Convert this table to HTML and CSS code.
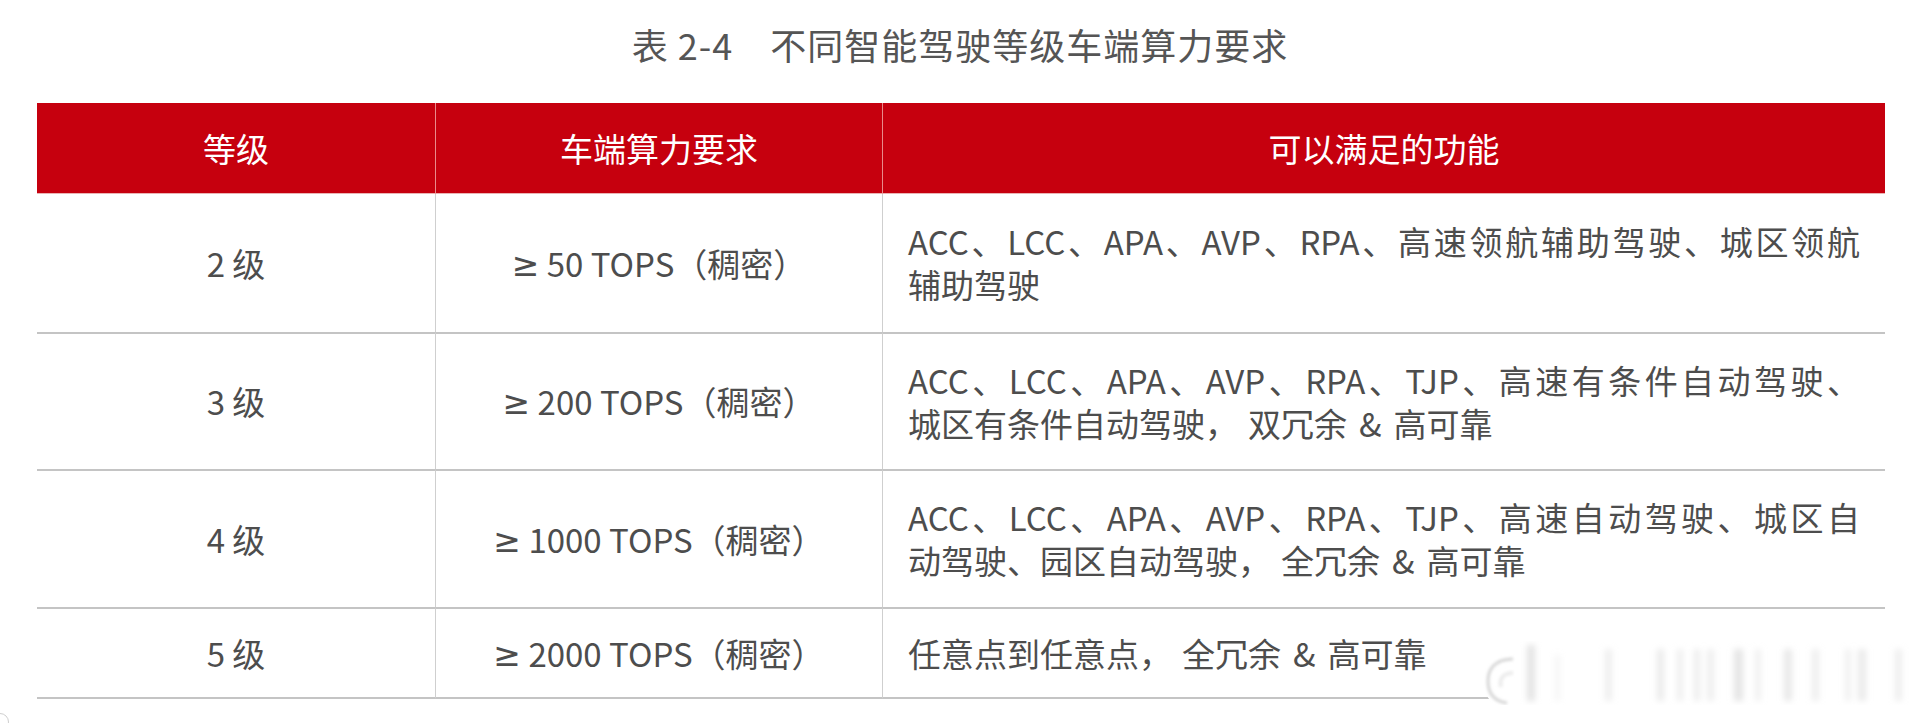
FILE: index.html
```html
<!DOCTYPE html>
<html lang="zh-CN">
<head>
<meta charset="utf-8">
<title>表 2-4 不同智能驾驶等级车端算力要求</title>
<link rel="stylesheet" href="styles.css">
</head>
<body>
<div class="page">
  <h1 class="title">表 2-4　不同智能驾驶等级车端算力要求</h1>
  <div class="grid">
    <div class="cell head c1">等级</div>
    <div class="cell head c2">车端算力要求</div>
    <div class="cell head c3">可以满足的功能</div>

    <div class="cell body first c1">2 级</div>
    <div class="cell body first c2"><span class="ge">≥</span>&nbsp;50 TOPS（稠密）</div>
    <div class="cell body first c3 fn">
      <span class="ln full">ACC、LCC、APA、AVP、RPA、高速领航辅助驾驶、城区领航</span>
      <span class="ln">辅助驾驶</span>
    </div>

    <div class="cell body c1">3 级</div>
    <div class="cell body c2"><span class="ge">≥</span>&nbsp;200 TOPS（稠密）</div>
    <div class="cell body c3 fn">
      <span class="ln full">ACC、LCC、APA、AVP、RPA、TJP、高速有条件自动驾驶、</span>
      <span class="ln">城区有条件自动驾驶，<span class="after-comma">双冗余</span><span class="amp">&amp;</span>高可靠</span>
    </div>

    <div class="cell body c1">4 级</div>
    <div class="cell body c2"><span class="ge">≥</span>&nbsp;1000 TOPS（稠密）</div>
    <div class="cell body c3 fn">
      <span class="ln full">ACC、LCC、APA、AVP、RPA、TJP、高速自动驾驶、城区自</span>
      <span class="ln">动驾驶、园区自动驾驶，<span class="after-comma">全冗余</span><span class="amp">&amp;</span>高可靠</span>
    </div>

    <div class="cell body last c1">5 级</div>
    <div class="cell body last c2"><span class="ge">≥</span>&nbsp;2000 TOPS（稠密）</div>
    <div class="cell body last c3 fn">
      <span class="ln">任意点到任意点，<span class="after-comma">全冗余</span><span class="amp">&amp;</span>高可靠</span>
    </div>
  </div>

  <svg class="watermark" width="437" height="64" viewBox="0 0 437 64" aria-hidden="true">
    <defs>
      <filter id="blur" x="-100%" y="-20%" width="300%" height="140%">
        <feGaussianBlur stdDeviation="3"/>
      </filter>
      <filter id="soft" x="-50%" y="-50%" width="200%" height="200%">
        <feGaussianBlur stdDeviation="1.8"/>
      </filter>
    </defs>
    <path d="M24 16 H437 V64 H24 C8 64 3 54 3 40 C3 26 10 16 24 16 Z" fill="#ffffff"/>
    <path d="M32 18 C14 18 7 28 7 40 C7 52 12 60 26 62" fill="none" stroke="#d6d6d6" stroke-width="3" filter="url(#soft)"/>
    <path d="M32 32 C22 32 18 38 20 46" fill="none" stroke="#ececec" stroke-width="4" filter="url(#soft)"/>
    <g filter="url(#blur)" fill="#d9d9d9">
      <rect x="46" y="4" width="8" height="56" opacity="0.75"/>
      <rect x="74" y="14" width="5" height="46" opacity="0.3"/>
      <rect x="124" y="8" width="7" height="52" opacity="0.45"/>
      <rect x="176" y="8" width="7" height="52" opacity="0.55"/>
      <rect x="196" y="8" width="6" height="52" opacity="0.45"/>
      <rect x="213" y="8" width="6" height="52" opacity="0.5"/>
      <rect x="226" y="8" width="7" height="52" opacity="0.45"/>
      <rect x="253" y="8" width="9" height="52" opacity="0.7"/>
      <rect x="274" y="8" width="6" height="52" opacity="0.4"/>
      <rect x="303" y="8" width="8" height="52" opacity="0.6"/>
      <rect x="331" y="8" width="7" height="52" opacity="0.45"/>
      <rect x="364" y="8" width="6" height="52" opacity="0.4"/>
      <rect x="377" y="8" width="8" height="52" opacity="0.55"/>
      <rect x="414" y="8" width="7" height="52" opacity="0.45"/>
    </g>
  </svg>
  <div class="corner-arc"></div>
</div>
</body>
</html>
```

FILE: styles.css
```css
html, body {
  margin: 0;
  padding: 0;
  background: #ffffff;
}

body {
  font-family: "Noto Sans CJK SC", "Noto Sans", sans-serif;
  color: #4d4d4d;
}

.page {
  position: relative;
  width: 1920px;
  height: 723px;
  overflow: hidden;
}

.title {
  margin: 19px 0 0 0;
  height: 50px;
  line-height: 50px;
  font-size: 36px;
  font-weight: 400;
  text-align: center;
  color: #555555;
  letter-spacing: 1px;
}

.grid {
  display: grid;
  margin: 34px 0 0 37px;
  width: 1848px;
  grid-template-columns: 398px 447px 1003px;
  grid-template-rows: 91px 138px 137px 138px 92px;
}

.cell {
  display: flex;
  align-items: center;
  box-sizing: border-box;
  font-size: 33px;
  line-height: 43px;
}

.c1, .c2 {
  justify-content: center;
  text-align: center;
}

.c2, .c3 {
  border-left: 1px solid #cfcfcf;
}

.ge {
  font-family: "Noto Sans", "DejaVu Sans", sans-serif;
}

.head {
  background: #c6000e;
  color: #ffffff;
  justify-content: center;
  border-bottom: 1px solid #eab4b4;
}

.head.c2, .head.c3 {
  border-left: 1px solid #e98a8a;
}

.body {
  border-top: 2px solid #c4c4c4;
  color: #4d4d4d;
}

.body.first {
  border-top: none;
}

.body.last {
  border-bottom: 2px solid #c4c4c4;
}

.fn {
  flex-direction: column;
  align-items: stretch;
  justify-content: center;
  padding: 0 25px;
}

.ln {
  display: block;
  white-space: nowrap;
  text-align: left;
}

.ln.full {
  text-align: justify;
  text-align-last: justify;
  text-justify: inter-character;
  white-space: normal;
}

.after-comma {
  margin-left: 10px;
}

.amp {
  margin: 0 12px;
}

.watermark {
  position: absolute;
  left: 1481px;
  top: 641px;
}

.corner-arc {
  position: absolute;
  left: -9px;
  top: 713px;
  width: 16px;
  height: 16px;
  border: 1px solid #cfcfcf;
  border-radius: 50%;
}
```
